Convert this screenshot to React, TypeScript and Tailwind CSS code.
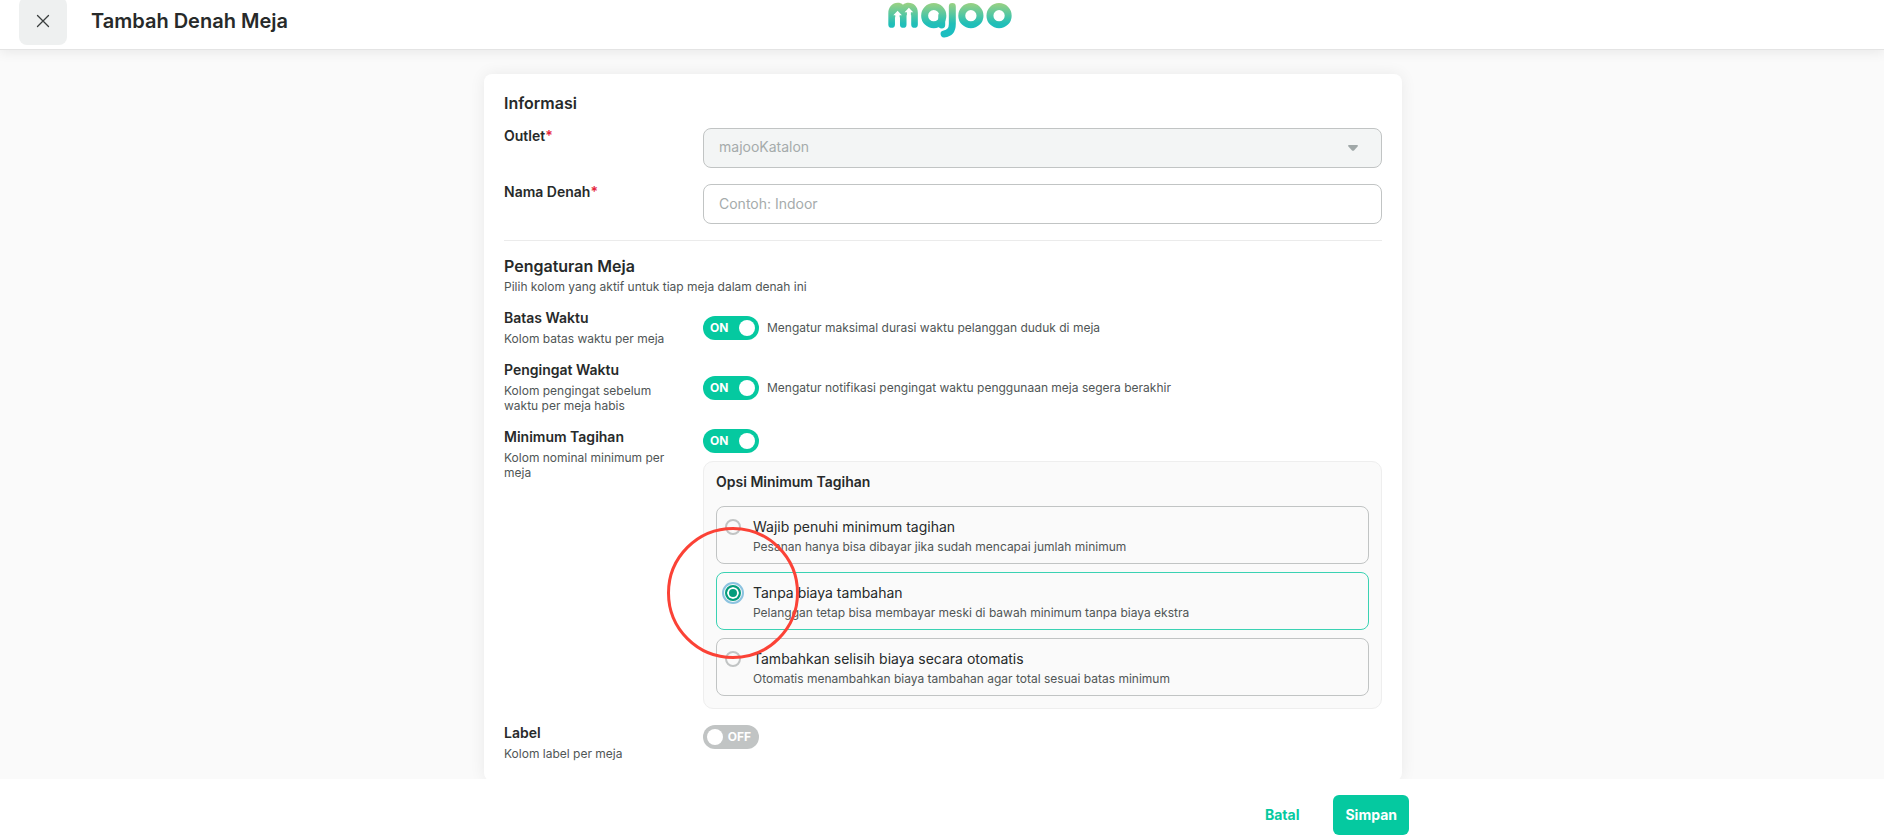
import { useState, type ReactNode } from "react";

function MajooLogo() {
  return (
    <svg viewBox="0 0 374 108" className="h-9 w-[124px]" role="img" aria-label="majoo">
      <defs>
        <linearGradient id="logo" gradientUnits="userSpaceOnUse" x1="0" y1="4" x2="0" y2="84">
          <stop offset="0" stopColor="#98d183" />
          <stop offset="0.35" stopColor="#62c99c" />
          <stop offset="0.75" stopColor="#22bfb7" />
          <stop offset="1" stopColor="#1cbec0" />
        </linearGradient>
      </defs>
      <path
        fill="url(#logo)"
        d="M1 34C1 15 13 2 29 2c7 0 12 2 16 6 5-4 11-6 17-6 16 0 28 12 28 30v36c0 13-20 13-20 0V40H56v28c0 13-20 13-20 0V46H21v22c0 13-20 13-20 0Z"
      />
      <path fill="#fff" d="M29 26l13 14h-7v39H22V40h-6ZM63 17l13 14h-7v48H57V31h-7Z" />
      <g fill="none" stroke="url(#logo)" strokeWidth="21" strokeLinecap="round">
        <circle cx="138" cy="41" r="27.5" />
        <path d="M162 41V69M194 13V66C194 83 186 94 169 96" />
        <circle cx="250" cy="41" r="27.5" />
        <circle cx="335" cy="41" r="27.5" />
      </g>
    </svg>
  );
}

function Toggle({ id, initial }: { id: string; initial: boolean }) {
  const [on, setOn] = useState(initial);
  return (
    <label
      className={
        "relative flex h-6 w-14 shrink-0 cursor-pointer items-center justify-between rounded-full text-xs font-bold text-white " +
        (on ? "bg-[#05c9a0] pl-[7px] pr-1" : "flex-row-reverse bg-[#c1c4c4] pl-1 pr-2")
      }
    >
      <input
        type="checkbox"
        role="switch"
        aria-labelledby={id}
        className="sr-only"
        checked={on}
        onChange={(e) => setOn(e.target.checked)}
      />
      <span>{on ? "ON" : "OFF"}</span>
      <span className="size-4 rounded-full bg-white" />
    </label>
  );
}

function SettingRow({
  id,
  title,
  hint,
  initial,
  description,
  children,
}: {
  id: string;
  title: string;
  hint: string;
  initial: boolean;
  description?: string;
  children?: ReactNode;
}) {
  return (
    <div className={"flex gap-8 " + (description ? "items-center" : "items-start")}>
      <div className="w-[167px] shrink-0">
        <h3 id={id} className="text-sm leading-4 font-semibold">
          {title}
        </h3>
        <p className="mt-[5px] text-xs leading-[15px] text-[#505656]">{hint}</p>
      </div>
      <div className="min-w-0 flex-1">
        <div className="flex items-center gap-2">
          <Toggle id={id} initial={initial} />
          {description && <p className="text-xs leading-4 text-[#505656]">{description}</p>}
        </div>
        {children}
      </div>
    </div>
  );
}

const options = [
  {
    value: "wajib",
    title: "Wajib penuhi minimum tagihan",
    text: "Pesanan hanya bisa dibayar jika sudah mencapai jumlah minimum",
  },
  {
    value: "tanpa",
    title: "Tanpa biaya tambahan",
    text: "Pelanggan tetap bisa membayar meski di bawah minimum tanpa biaya ekstra",
  },
  {
    value: "otomatis",
    title: "Tambahkan selisih biaya secara otomatis",
    text: "Otomatis menambahkan biaya tambahan agar total sesuai batas minimum",
  },
];

function BillOptions() {
  const [selected, setSelected] = useState("tanpa");
  return (
    <div
      role="radiogroup"
      aria-labelledby="opsi-title"
      className="mt-2 rounded-[10px] border border-[#eeeeee] bg-[#fafafa] p-3"
    >
      <h4 id="opsi-title" className="pb-4 text-sm leading-4 font-semibold">
        Opsi Minimum Tagihan
      </h4>
      <div className="flex flex-col gap-2">
        {options.map((o) => {
          const active = o.value === selected;
          return (
            <label
              key={o.value}
              className={
                "flex cursor-pointer gap-3 rounded-lg border px-2 pt-[10px] pb-[9px] " +
                (active ? "border-[#3ad2b3]" : "border-[#c1c4c4]")
              }
            >
              <span className="relative flex h-5 items-center">
                <input
                  type="radio"
                  name="opsi"
                  value={o.value}
                  checked={active}
                  onChange={() => setSelected(o.value)}
                  className={
                    "size-4 appearance-none rounded-full border-2 " +
                    (active
                      ? "border-[#049c7c] bg-[#049c7c] shadow-[inset_0_0_0_2px_#fff] outline-2 outline-offset-1 outline-[#8cc3e0]"
                      : "border-[#c1c4c4]")
                  }
                />
                {active && (
                  <span className="pointer-events-none absolute top-1/2 left-1/2 z-10 size-[132px] -translate-x-1/2 -translate-y-1/2 rounded-full border-3 border-[#fb4236]" />
                )}
              </span>
              <span className="flex flex-col gap-[2px]">
                <span className="text-sm leading-5">{o.title}</span>
                <span className="text-xs leading-[15px] text-[#505656]">{o.text}</span>
              </span>
            </label>
          );
        })}
      </div>
    </div>
  );
}

export default function App() {
  return (
    <div className="flex h-screen flex-col bg-[#fafafa] font-['Inter',sans-serif] text-[#272a2a]">
      <header className="relative z-20 grid h-[50px] shrink-0 grid-cols-[1fr_auto_1fr] grid-rows-[49px] overflow-hidden border-b border-[#e4e4e4] bg-white pr-1 pl-[19px] shadow-[0_2px_12px_rgba(0,0,0,0.08)]">
        <div className="flex items-end gap-6 pb-1">
          <button
            type="button"
            aria-label="Tutup"
            className="flex size-12 shrink-0 items-center justify-center rounded-lg bg-[#eef0f0]"
          >
            <svg viewBox="0 0 14 14" className="size-[14px]" stroke="#3a3e3e" strokeWidth="1.3" strokeLinecap="round">
              <path d="M1.5 1.5l11 11M12.5 1.5l-11 11" />
            </svg>
          </button>
          <h1 className="flex h-12 items-center text-xl font-semibold">Tambah Denah Meja</h1>
        </div>
        <div className="pt-[2px]">
          <MajooLogo />
        </div>
      </header>

      <main className="min-h-0 flex-1 overflow-y-auto pt-6 pr-4 pl-[18px] [scrollbar-width:none]">
        <div className="mx-auto max-w-[934px] px-2">
          <form
            id="denah"
            className="flex flex-col gap-4 rounded-lg bg-white p-5 shadow-[0_0_16px_rgba(0,0,0,0.07)]"
          >
            <h2 className="text-base leading-[18px] font-semibold">Informasi</h2>
            <div className="flex gap-8">
              <label htmlFor="outlet" className="w-[167px] shrink-0 text-sm leading-4 font-semibold">
                Outlet<span className="text-[#e5243b]">*</span>
              </label>
              <div className="relative flex-1">
                <select
                  id="outlet"
                  disabled
                  className="h-10 w-full appearance-none rounded-lg border border-[#c1c4c4] bg-[#f3f5f5] px-[15px] pb-[2px] text-sm text-[#a5abab] opacity-100"
                >
                  <option>majooKatalon</option>
                </select>
                <svg
                  viewBox="0 0 10 6"
                  className="pointer-events-none absolute top-[17px] right-6 h-[6px] w-[10px]"
                  fill="#a0a8a8"
                >
                  <path d="M0 1Q0 0 1 0H9Q10 0 10 1L6 5.4Q5 6.2 4 5.4Z" />
                </svg>
              </div>
            </div>
            <div className="flex gap-8">
              <label htmlFor="nama" className="w-[167px] shrink-0 text-sm leading-4 font-semibold">
                Nama Denah<span className="text-[#e5243b]">*</span>
              </label>
              <input
                id="nama"
                type="text"
                placeholder="Contoh: Indoor"
                className="h-10 min-w-0 flex-1 rounded-lg border border-[#c1c4c4] bg-white px-[15px] pb-[2px] text-sm placeholder:text-[#a5abab]"
              />
            </div>
            <hr className="border-[#ebebeb]" />
            <div>
              <h2 className="text-base leading-[18px] font-semibold">Pengaturan Meja</h2>
              <p className="mt-1 text-xs leading-[15px] text-[#505656]">
                Pilih kolom yang aktif untuk tiap meja dalam denah ini
              </p>
            </div>
            <SettingRow
              id="batas"
              title="Batas Waktu"
              hint="Kolom batas waktu per meja"
              initial={true}
              description="Mengatur maksimal durasi waktu pelanggan duduk di meja"
            />
            <SettingRow
              id="pengingat"
              title="Pengingat Waktu"
              hint="Kolom pengingat sebelum waktu per meja habis"
              initial={true}
              description="Mengatur notifikasi pengingat waktu penggunaan meja segera berakhir"
            />
            <SettingRow id="minimum" title="Minimum Tagihan" hint="Kolom nominal minimum per meja" initial={true}>
              <BillOptions />
            </SettingRow>
            <SettingRow id="label" title="Label" hint="Kolom label per meja" initial={false} />
          </form>
        </div>
      </main>

      <footer className="relative z-20 h-14 shrink-0 bg-white px-4 pt-4">
        <div className="mx-auto flex max-w-[934px] justify-end gap-[22px]">
          <button type="button" className="h-10 rounded-md px-3 text-sm font-bold text-[#05c9a0]">
            Batal
          </button>
          <button type="submit" form="denah" className="h-10 rounded-md bg-[#05c9a0] px-3 text-sm font-bold text-white">
            Simpan
          </button>
        </div>
      </footer>
    </div>
  );
}
